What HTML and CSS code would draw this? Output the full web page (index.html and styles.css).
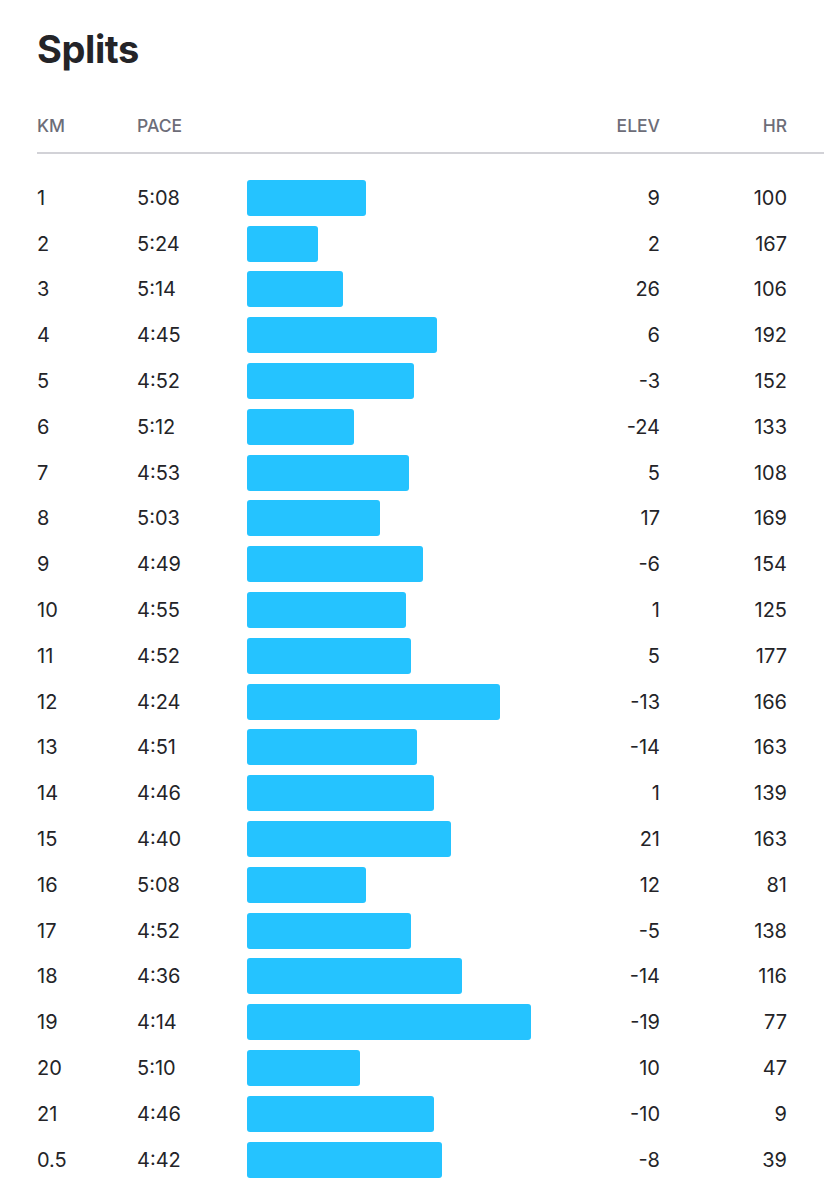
FILE: index.html
```html
<!DOCTYPE html>
<html lang="en">
<head>
<meta charset="utf-8">
<title>Splits</title>
<link rel="stylesheet" href="styles.css">
</head>
<body>
<section class="splits">
  <h1 class="title">Splits</h1>
  <div class="head">
    <span>KM</span>
    <span>PACE</span>
    <span></span>
    <span class="num">ELEV</span>
    <span class="num">HR</span>
  </div>
  <div class="rows">
    <div class="row"><span>1</span><span>5:08</span><span class="track"><span class="bar" style="width:119px"></span></span><span class="num">9</span><span class="num">100</span></div>
    <div class="row"><span>2</span><span>5:24</span><span class="track"><span class="bar" style="width:71px"></span></span><span class="num">2</span><span class="num">167</span></div>
    <div class="row"><span>3</span><span>5:14</span><span class="track"><span class="bar" style="width:96px"></span></span><span class="num">26</span><span class="num">106</span></div>
    <div class="row"><span>4</span><span>4:45</span><span class="track"><span class="bar" style="width:190px"></span></span><span class="num">6</span><span class="num">192</span></div>
    <div class="row"><span>5</span><span>4:52</span><span class="track"><span class="bar" style="width:167px"></span></span><span class="num">-3</span><span class="num">152</span></div>
    <div class="row"><span>6</span><span>5:12</span><span class="track"><span class="bar" style="width:107px"></span></span><span class="num">-24</span><span class="num">133</span></div>
    <div class="row"><span>7</span><span>4:53</span><span class="track"><span class="bar" style="width:162px"></span></span><span class="num">5</span><span class="num">108</span></div>
    <div class="row"><span>8</span><span>5:03</span><span class="track"><span class="bar" style="width:133px"></span></span><span class="num">17</span><span class="num">169</span></div>
    <div class="row"><span>9</span><span>4:49</span><span class="track"><span class="bar" style="width:176px"></span></span><span class="num">-6</span><span class="num">154</span></div>
    <div class="row"><span>10</span><span>4:55</span><span class="track"><span class="bar" style="width:159px"></span></span><span class="num">1</span><span class="num">125</span></div>
    <div class="row"><span>11</span><span>4:52</span><span class="track"><span class="bar" style="width:164px"></span></span><span class="num">5</span><span class="num">177</span></div>
    <div class="row"><span>12</span><span>4:24</span><span class="track"><span class="bar" style="width:253px"></span></span><span class="num">-13</span><span class="num">166</span></div>
    <div class="row"><span>13</span><span>4:51</span><span class="track"><span class="bar" style="width:170px"></span></span><span class="num">-14</span><span class="num">163</span></div>
    <div class="row"><span>14</span><span>4:46</span><span class="track"><span class="bar" style="width:187px"></span></span><span class="num">1</span><span class="num">139</span></div>
    <div class="row"><span>15</span><span>4:40</span><span class="track"><span class="bar" style="width:204px"></span></span><span class="num">21</span><span class="num">163</span></div>
    <div class="row"><span>16</span><span>5:08</span><span class="track"><span class="bar" style="width:119px"></span></span><span class="num">12</span><span class="num">81</span></div>
    <div class="row"><span>17</span><span>4:52</span><span class="track"><span class="bar" style="width:164px"></span></span><span class="num">-5</span><span class="num">138</span></div>
    <div class="row"><span>18</span><span>4:36</span><span class="track"><span class="bar" style="width:215px"></span></span><span class="num">-14</span><span class="num">116</span></div>
    <div class="row"><span>19</span><span>4:14</span><span class="track"><span class="bar" style="width:284px"></span></span><span class="num">-19</span><span class="num">77</span></div>
    <div class="row"><span>20</span><span>5:10</span><span class="track"><span class="bar" style="width:113px"></span></span><span class="num">10</span><span class="num">47</span></div>
    <div class="row"><span>21</span><span>4:46</span><span class="track"><span class="bar" style="width:187px"></span></span><span class="num">-10</span><span class="num">9</span></div>
    <div class="row"><span>0.5</span><span>4:42</span><span class="track"><span class="bar" style="width:195px"></span></span><span class="num">-8</span><span class="num">39</span></div>
  </div>
</section>
</body>
</html>
```

FILE: styles.css
```css
html, body {
  margin: 0;
  padding: 0;
  background: #ffffff;
}

body {
  font-family: Inter, "Noto Sans", "Liberation Sans", sans-serif;
  color: #242428;
}

.splits {
  padding: 26px 0 0 37px;
}

.title {
  margin: 0;
  font-size: 38px;
  line-height: 46px;
  font-weight: 700;
  letter-spacing: -0.4px;
  color: #242428;
}

.head,
.row {
  display: grid;
  grid-template-columns: 100px 110px 1fr 100px 127px;
  align-items: center;
  padding-right: 37px;
}

.head {
  margin-top: 43px;
  padding-bottom: 15px;
  border-bottom: 2px solid #d2d2d7;
  font-size: 17.5px;
  line-height: 22px;
  font-weight: 500;
  color: #6d6d78;
}

.rows {
  padding-top: 21px;
}

.row {
  height: 45.8px;
  font-size: 20px;
  line-height: 24px;
  font-weight: 400;
  color: #242428;
}

.num {
  text-align: right;
}

.track {
  display: flex;
  align-items: center;
}

.bar {
  display: block;
  height: 36px;
  background: #25c3ff;
  border-radius: 3px;
}
```
